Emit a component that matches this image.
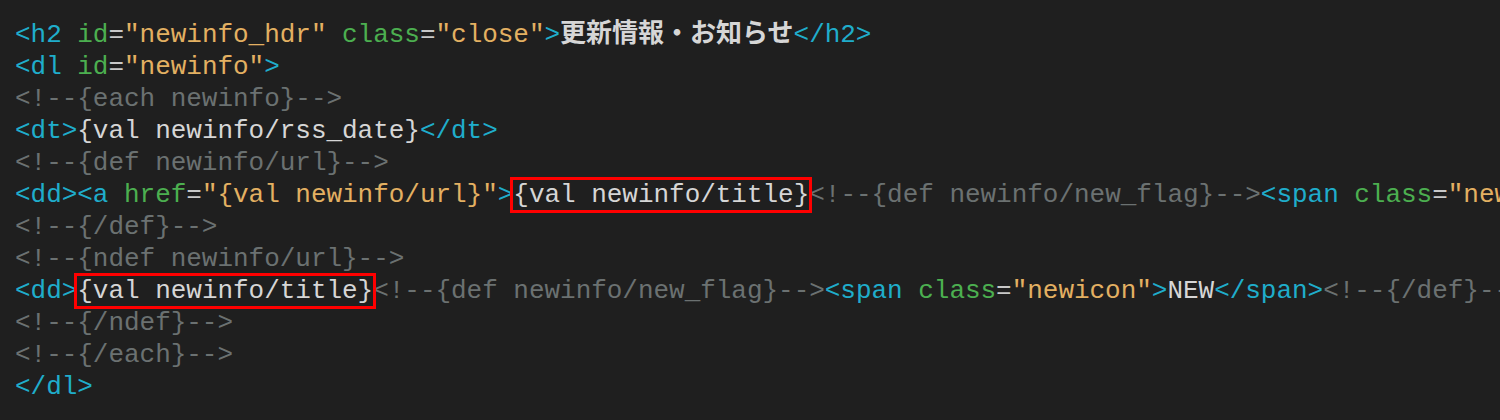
import React from 'react';

const C = {
  tag: 'text-[#1fadcb]',
  attr: 'text-[#4caf50]',
  str: 'text-[#e3b062]',
  com: 'text-[#6b7171]',
  txt: 'text-[#d6d6d6]',
  eq: 'text-[#c8c8c8]',
};

// [color, text, flags]
const lines = [
  [['tag', '<h2 '], ['attr', 'id'], ['eq', '='], ['str', '"newinfo_hdr" '], ['attr', 'class'], ['eq', '='], ['str', '"close"'], ['tag', '>'], ['txt', '更新情報・お知らせ', 'cjk'], ['tag', '</h2>']],
  [['tag', '<dl '], ['attr', 'id'], ['eq', '='], ['str', '"newinfo"'], ['tag', '>']],
  [['com', '<!--{each newinfo}-->']],
  [['tag', '<dt>'], ['txt', '{val newinfo/rss_date}'], ['tag', '</dt>']],
  [['com', '<!--{def newinfo/url}-->']],
  [['tag', '<dd><a '], ['attr', 'href'], ['eq', '='], ['str', '"{val newinfo/url}"'], ['tag', '>'], ['txt', '{val newinfo/title}', 'box'], ['com', '<!--{def newinfo/new_flag}-->'], ['tag', '<span '], ['attr', 'class'], ['eq', '='], ['str', '"newicon"'], ['tag', '>'], ['txt', 'NEW'], ['tag', '</span>'], ['com', '<!--{/def}-->'], ['tag', '</a></dd>']],
  [['com', '<!--{/def}-->']],
  [['com', '<!--{ndef newinfo/url}-->']],
  [['tag', '<dd>'], ['txt', '{val newinfo/title}', 'box'], ['com', '<!--{def newinfo/new_flag}-->'], ['tag', '<span '], ['attr', 'class'], ['eq', '='], ['str', '"newicon"'], ['tag', '>'], ['txt', 'NEW'], ['tag', '</span>'], ['com', '<!--{/def}-->'], ['tag', '</dd>']],
  [['com', '<!--{/ndef}-->']],
  [['com', '<!--{/each}-->']],
  [['tag', '</dl>']],
];

export default function App() {
  return (
    <div className="w-[1500px] h-[420px] bg-[#1f1f1f] overflow-hidden pt-[15px] pl-[15px] font-['Liberation_Mono','Noto_Sans_CJK_JP',monospace] text-[26px] leading-[32px]">
      {lines.map((segs, i) => (
        <div key={i} className="whitespace-pre tracking-[-0.03px]">
          {segs.map(([c, t, f], j) => {
            if (f === 'cjk') {
              return (
                <span key={j} className="font-['Noto_Sans_CJK_JP',sans-serif] font-bold tracking-normal text-[#d6d6d6]">
                  {t}
                </span>
              );
            }
            if (f === 'box') {
              return (
                <span key={j} className={`${C[c]} outline-3 outline-solid outline-[#ff0000] outline-offset-0`}>
                  {t}
                </span>
              );
            }
            return (
              <span key={j} className={C[c]}>
                {t}
              </span>
            );
          })}
        </div>
      ))}
    </div>
  );
}
